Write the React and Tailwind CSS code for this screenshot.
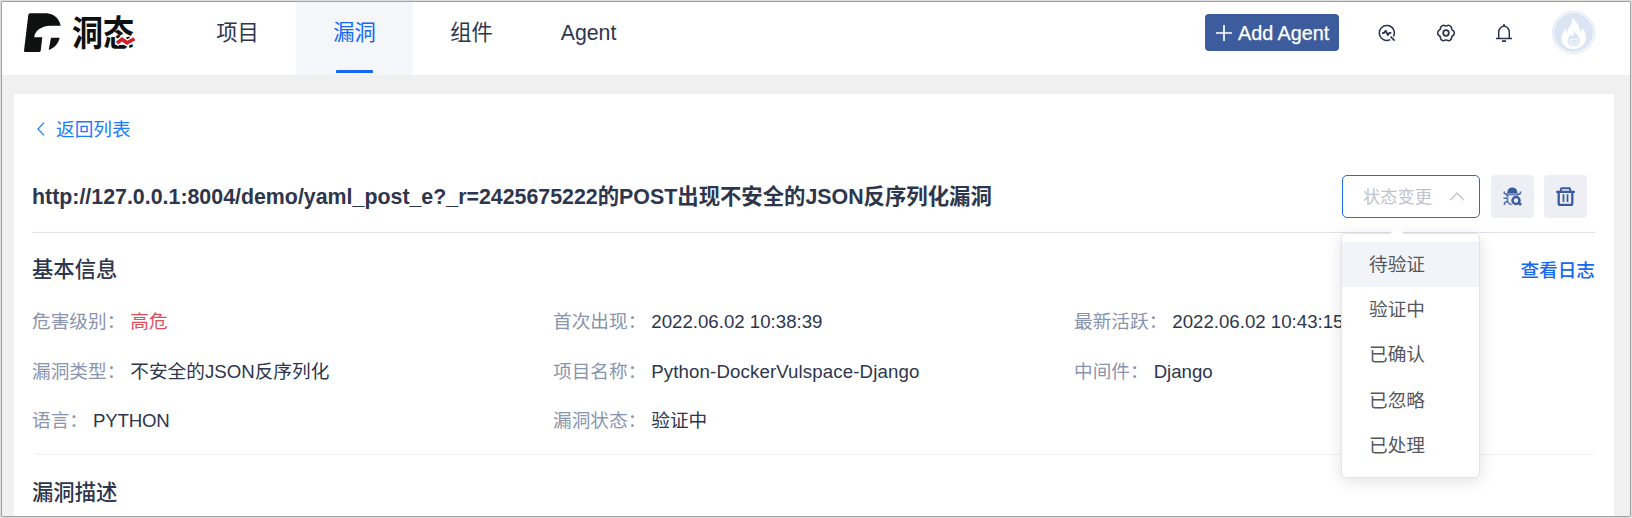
const tabs = ["项目", "漏洞", "组件", "Agent"];

const rows = [
  [
    ["危害级别", "高危", "text-[#e34d59]"],
    ["首次出现", "2022.06.02 10:38:39", ""],
    ["最新活跃", "2022.06.02 10:43:15", ""],
  ],
  [
    ["漏洞类型", "不安全的JSON反序列化", ""],
    ["项目名称", "Python-DockerVulspace-Django", "tracking-[0.12px]"],
    ["中间件", "Django", ""],
  ],
  [
    ["语言", "PYTHON", "tracking-[-0.2px]"],
    ["漏洞状态", "验证中", ""],
  ],
];

const statuses = ["待验证", "验证中", "已确认", "已忽略", "已处理"];

function Logo() {
  return (
    <div className="relative flex h-[39px] w-[113px]">
      <svg className="h-[39px] w-[37px] shrink-0" viewBox="72 39 111 117" fill="#0e1110">
        <path d="M90 39.500H140C164 41 179 58 182 77H150C124 78 103 93 103 112H127L122 153Q121 156 117 156H76Q72 156 72 152L85 44Q86 39.500 90 39.500Z" />
        <path d="M153 113H179C175 130 164 143 146 150Z" />
      </svg>
      <span className="ml-[11px] mt-[3px] origin-left scale-y-[1.15] whitespace-nowrap text-[31px] leading-[36px] font-bold text-[#0e1110]">
        洞态
      </span>
      <svg className="absolute left-[92px] top-[23px] h-[10px] w-[19px]" viewBox="0 0 19 10">
        <path d="M0 7.500L6 3.500L11 7L19 3" fill="none" stroke="#fff" strokeWidth="6.500" />
        <path d="M1 7L6 3.300L11 6.800L18.500 2.800" fill="none" stroke="#cf1f2b" strokeWidth="3.600" />
      </svg>
    </div>
  );
}

function ScanIcon() {
  return (
    <svg className="size-[18px]" viewBox="0 0 18 18" fill="none" stroke="#2b3350" strokeWidth="1.500">
      <path d="M12.200 15.600A7.500 7.500 0 1 1 15.400 12.500" />
      <path d="M12.600 12.600L16.600 16.600" strokeWidth="1.700" />
      <path d="M4 9.200H5.700L7.700 6.800L9.900 11L11.500 8.800H13.300" strokeWidth="1.800" strokeLinejoin="round" />
    </svg>
  );
}

function GearIcon() {
  return (
    <svg className="size-[18px]" viewBox="0 0 18 18" fill="none" stroke="#2b3350" strokeWidth="1.600" strokeLinejoin="round">
      <path d="M16.700 10.900Q14.200 12 14.400 14.600Q13.400 16.800 11.500 16.800Q9 15.200 6.500 16.800Q4.600 16.800 3.600 14.600Q3.800 12 1.300 10.900Q0 9 1.300 7.100Q3.800 6 3.600 3.400Q4.600 1.200 6.500 1.200Q9 2.800 11.500 1.200Q13.400 1.200 14.400 3.400Q14.200 6 16.700 7.100Q18 9 16.700 10.900Z" />
      <circle cx="9" cy="9" r="2.800" strokeWidth="1.800" />
    </svg>
  );
}

function BellIcon() {
  return (
    <svg className="size-[18px]" viewBox="0 0 18 18" fill="none" stroke="#2b3350" strokeWidth="1.500">
      <path d="M3.700 14.500V8A5.300 5.800 0 0 1 14.300 8V14.500" />
      <path d="M1 14.600H17" />
      <path d="M9 2.400V0.300" strokeWidth="1.900" />
      <path d="M7 17.100H11" strokeWidth="1.800" />
    </svg>
  );
}

function Avatar() {
  return (
    <svg className="size-[43px]" viewBox="0 0 43 43">
      <circle cx="21.500" cy="21.500" r="21" fill="#fff" stroke="#d3def0" strokeWidth="0.900" />
      <circle cx="21.500" cy="21.500" r="19.600" fill="#dae4f3" />
      <path d="M20 7C24 10 28 15 28.500 21C29.500 20.500 30 19 29.800 16.500C33.500 21 35.500 27 32.500 32C30 36 26 38 21.500 38C16 38 11.500 35.500 10 30.500C8.500 25 11 21 14 17C14 19.500 14.500 21 15.700 22C15 16 21.500 14 20 7Z" fill="#fff" />
      <path d="M22.500 19C22.500 22.500 28 25 28 30A6.200 6 0 0 1 15.600 30C15.600 26.500 18 25.500 18.300 23.500C19.500 24 20 24.800 20.300 25.500C21.800 24 22.700 22 22.500 19Z" fill="#dae4f3" />
      <path d="M18 29C18 34 20 35.500 22 35.500S26 34 26 29Q24 27.500 22 29Q20 27.500 18 29Z" fill="none" stroke="#fff" strokeWidth="0.900" />
      <path d="M19.500 31L21 31.800M24.500 31L23 31.800M20.800 33.600H23.200" stroke="#fff" strokeWidth="0.900" />
    </svg>
  );
}

function BugIcon() {
  return (
    <svg className="size-[19px]" viewBox="0 0 19 19" fill="none" stroke="#3b5b9f" strokeWidth="1.600">
      <path d="M5 5.500A4.400 4.900 0 0 1 13.700 5.500Z" fill="#3b5b9f" />
      <path d="M1.300 4.500V6.300L4.300 8M17.500 4.500V6.300L14.500 8M0.500 11.300H4M1.500 18V16L4.300 14.200" strokeOpacity="0.850" />
      <path d="M3.500 7.400H15.300" strokeWidth="2.200" strokeOpacity="0.700" />
      <path d="M4.500 7.500V13.500Q4.800 16.500 8.700 17.600" strokeWidth="1.900" strokeOpacity="0.700" />
      <circle cx="13" cy="13.500" r="3.500" strokeWidth="2.500" />
      <path d="M15.500 15.500L18 18" strokeWidth="2.500" />
    </svg>
  );
}

function TrashIcon() {
  return (
    <svg className="size-[19px]" viewBox="0 0 19 19" fill="none" stroke="#3b5b9f" strokeWidth="2">
      <path d="M0.200 4.800H18.800" strokeWidth="2.200" />
      <path d="M4.500 4.300L5.300 1.300H13.700L14.500 4.300" strokeLinejoin="round" />
      <path d="M2.700 5V16.500Q2.700 18 4.200 18H14.800Q16.300 18 16.300 16.500V5" strokeWidth="2.300" />
      <path d="M7.500 7.300V15M11.500 7.300V15" strokeWidth="1.800" />
    </svg>
  );
}

function Header() {
  return (
    <header className="flex h-[73px] shrink-0 bg-white">
      <div className="w-[177px] shrink-0 pl-[22px] pt-[11px]">
        <Logo />
      </div>
      <nav className="flex">
        {tabs.map((tab, i) => (
          <a
            key={tab}
            className={
              i === 1
                ? "flex w-[117px] flex-col items-center justify-between bg-[#f4f6fa] pb-[2px] pt-[16px] text-[21.300px] leading-[31px] text-[#1668f5]"
                : "flex w-[117px] flex-col items-center pt-[16px] text-[21.300px] leading-[31px] text-[#2d364d]"
            }
          >
            {tab}
            {i === 1 && <span className="h-[3px] w-[37px] rounded-t-[1px] bg-[#1668f5]" />}
          </a>
        ))}
      </nav>
      <div className="ml-auto flex h-[61px] items-center pr-[35px]">
        <button className="flex h-[37px] w-[134px] items-center rounded-[4px] bg-[#3c5c9d] pl-[11px] text-[19.800px] text-white">
          <svg className="size-[16px]" viewBox="0 0 16 16" fill="none" stroke="#fff" strokeWidth="1.700">
            <path d="M0 8H16M8 0V16" />
          </svg>
          <span className="ml-[6px] whitespace-nowrap pt-[2px] [-webkit-text-stroke:0.25px_white]">Add Agent</span>
        </button>
        <div className="ml-[39px] flex gap-[40.500px]">
          <ScanIcon />
          <GearIcon />
          <BellIcon />
        </div>
        <div className="ml-[39px]">
          <Avatar />
        </div>
      </div>
    </header>
  );
}

function StatusSelect() {
  return (
    <div className="relative">
      <button className="flex h-[43px] w-[138px] items-center rounded-[5px] border border-[#1f6bf5] pl-[20px] text-[17.300px] text-[#bfc3cc]">
        <span className="pt-[2px]">状态变更</span>
        <svg className="ml-[17px] h-[9px] w-[16px]" viewBox="0 0 16 9" fill="none" stroke="#bfc3cc" strokeWidth="1.300">
          <path d="M1 8.200L8 1L15 8.200" />
        </svg>
      </button>
      <div className="absolute -left-px top-[58px] z-10 h-[245px] w-[139px] rounded-[5px] border border-[#e1e4ec] bg-white pt-[8px] shadow-[0_3px_16px_rgba(0,0,0,0.12)]">
        <svg className="absolute left-[47px] top-[-8px] h-[9px] w-[16px]" viewBox="0 0 16 9">
          <path d="M0 9L7 1.500Q8 0.500 9 1.500L16 9Z" fill="#fff" />
        </svg>
        <ul>
          {statuses.map((s, i) => (
            <li
              key={s}
              className={
                i === 0
                  ? "h-[45.200px] bg-[#f1f4f9] pl-[27px] text-[18.670px] leading-[45px] text-[#55585e]"
                  : "h-[45.200px] pl-[27px] text-[18.670px] leading-[46px] text-[#55585e]"
              }
            >
              {s}
            </li>
          ))}
        </ul>
      </div>
    </div>
  );
}

export default function App() {
  return (
    <div className="h-[518px] w-[1632px] overflow-hidden bg-[#dcdcdc] p-px font-['Liberation_Sans','Noto_Sans_CJK_SC',sans-serif]">
      <div className="flex h-[516px] flex-col overflow-hidden rounded-[2px] border border-[#a0a0a0] bg-[#f0f0f0]">
        <Header />
        <main className="ml-[12px] mr-[16px] mt-[19px] flex-1 bg-white pl-[18px] pr-[19px] text-[#2d364d]">
          <a className="flex h-[70px] items-center pl-[5px] text-[18.670px] text-[#1a7cff]">
            <svg className="h-[14px] w-[8px]" viewBox="0 0 8 14" fill="none" stroke="#1a7cff" strokeWidth="1.200">
              <path d="M7 0.700L1 7L7 13.300" />
            </svg>
            <span className="ml-[11px] pt-[2px]">返回列表</span>
          </a>
          <div className="flex h-[69px] items-start justify-between border-b border-[#dfe2ea] pt-[11px] pr-[8px]">
            <h1 className="whitespace-nowrap text-[21.360px] leading-[45px] font-bold">
              http://127.0.0.1:8004/demo/yaml_post_e?_r=2425675222的POST出现不安全的JSON反序列化漏洞
            </h1>
            <div className="flex">
              <StatusSelect />
              <button className="ml-[11px] flex size-[43px] items-center justify-center rounded-[4px] bg-[#eeeff4]">
                <BugIcon />
              </button>
              <button className="ml-[10px] flex size-[43px] items-center justify-center rounded-[4px] bg-[#eeeff4]">
                <TrashIcon />
              </button>
            </div>
          </div>
          <section className="h-[222px] rounded-b-[6px] border-b border-[#eff0f2]">
            <div className="flex h-[64px] items-center justify-between pt-[9px]">
              <h2 className="pt-[2px] text-[21.330px] font-medium">基本信息</h2>
              <a className="pt-[2px] text-[18.670px] font-medium text-[#1668f5]">查看日志</a>
            </div>
            {rows.map((row, r) => (
              <div key={r} className="grid h-[49.500px] grid-cols-[521px_521px_521px] items-center pt-px text-[18.670px]">
                {row.map(([label, value, tone]) => (
                  <div key={label} className="flex gap-[5px] whitespace-nowrap">
                    <span className="text-[#8a94ad]">{label}：</span>
                    <span className={tone}>{value}</span>
                  </div>
                ))}
              </div>
            ))}
          </section>
          <h2 className="pt-[23px] text-[21.330px] leading-[31px] font-medium">漏洞描述</h2>
        </main>
      </div>
    </div>
  );
}
